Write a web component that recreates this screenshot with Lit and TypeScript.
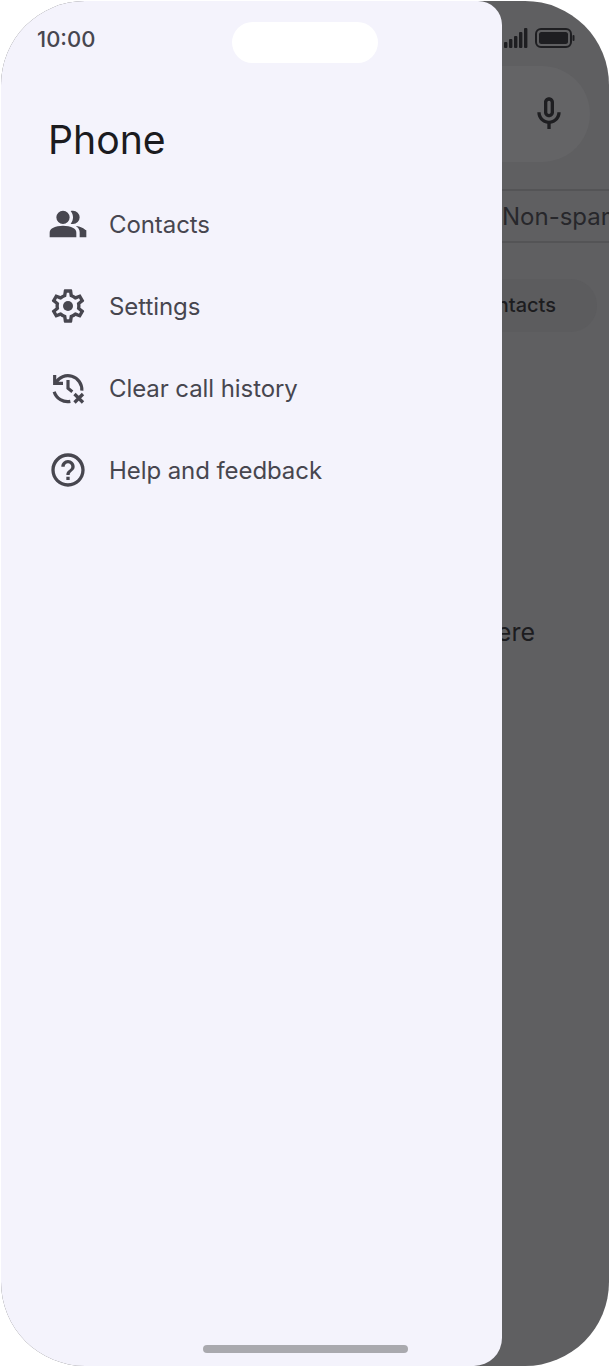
import { LitElement, html, css, svg } from 'lit';
import { customElement } from 'lit/decorators.js';

const MENU = [
  {
    label: 'Contacts',
    icon: svg`<path d="M1 20v-2.8q0-.85.438-1.563.437-.712 1.162-1.087 1.55-.775 3.15-1.163Q7.35 13 9 13t3.25.387q1.6.388 3.15 1.163.725.375 1.163 1.087Q17 16.35 17 17.2V20Zm18 0v-3q0-1.1-.612-2.113-.613-1.012-1.738-1.737 1.275.15 2.4.512 1.125.363 2.1.888.9.5 1.375 1.112Q23 15.275 23 16v4ZM9 12q-1.65 0-2.825-1.175Q5 9.65 5 8q0-1.65 1.175-2.825Q7.35 4 9 4q1.65 0 2.825 1.175Q13 6.35 13 8q0 1.65-1.175 2.825Q10.65 12 9 12Zm10-4q0 1.65-1.175 2.825Q16.65 12 15 12q-.275 0-.7-.062-.425-.063-.7-.138.675-.8 1.037-1.775Q15 9.05 15 8t-.363-2.025Q14.275 5 13.6 4.2q.35-.125.7-.163Q14.65 4 15 4q1.65 0 2.825 1.175Q19 6.35 19 8Z"/>`,
  },
  {
    label: 'Settings',
    icon: svg`<path d="M19.43 12.98c.04-.32.07-.64.07-.98s-.03-.66-.07-.98l2.11-1.65c.19-.15.24-.42.12-.64l-2-3.46c-.12-.22-.39-.3-.61-.22l-2.49 1c-.52-.4-1.08-.73-1.69-.98l-.38-2.65C14.46 2.18 14.25 2 14 2h-4c-.25 0-.46.18-.49.42l-.38 2.65c-.61.25-1.17.59-1.69.98l-2.49-1c-.23-.09-.49 0-.61.22l-2 3.46c-.13.22-.07.49.12.64l2.11 1.65c-.04.32-.07.65-.07.98s.03.66.07.98l-2.11 1.65c-.19.15-.24.42-.12.64l2 3.46c.12.22.39.3.61.22l2.49-1c.52.4 1.08.73 1.69.98l.38 2.65c.03.24.24.42.49.42h4c.25 0 .46-.18.49-.42l.38-2.65c.61-.25 1.17-.59 1.69-.98l2.49 1c.23.09.49 0 .61-.22l2-3.46c.12-.22.07-.49-.12-.64l-2.11-1.65zM17.45 11.27c.04.31.05.52.05.73 0 .21-.02.43-.05.73l-.14 1.13.89.7 1.08.84-.7 1.21-1.27-.51-1.04-.42-.9.68c-.43.32-.84.56-1.25.73l-1.06.43-.16 1.13-.2 1.35h-1.4l-.19-1.35-.16-1.13-1.06-.43c-.43-.18-.83-.41-1.23-.71l-.91-.7-1.06.43-1.27.51-.7-1.21 1.08-.84.89-.7-.14-1.13c-.03-.31-.05-.54-.05-.74s.02-.43.05-.73l.14-1.13-.89-.7-1.08-.84.7-1.21 1.27.51 1.04.42.9-.68c.43-.32.84-.56 1.25-.73l1.06-.43.16-1.13.2-1.35h1.39l.19 1.35.16 1.13 1.06.43c.43.18.83.41 1.23.71l.91.7 1.06-.43 1.27-.51.7 1.21-1.07.85-.89.7.14 1.13z"/><circle cx="12" cy="12" r="3"/>`,
  },
  {
    label: 'Clear call history',
    icon: svg`<g fill="none" stroke="currentColor" stroke-width="1.9">
      <path d="M4 4.2V9.2H9"/>
      <path d="M4.6 8.9A8.4 8.4 0 0 1 20.3 13.6"/>
      <path d="M3.7 14.2A8.4 8.4 0 0 0 13.4 20"/>
      <path d="M12 7.2V12.2L14.6 14.2"/>
      <path d="M15.9 15.6L21 20.7M21 15.6L15.9 20.7" stroke-width="2"/>
    </g>`,
  },
  {
    label: 'Help and feedback',
    icon: svg`<path d="M11 18h2v-2h-2v2zm1-16C6.48 2 2 6.48 2 12s4.48 10 10 10 10-4.48 10-10S17.52 2 12 2zm0 18c-4.41 0-8-3.59-8-8s3.59-8 8-8 8 3.59 8 8-3.59 8-8 8zm0-14c-2.21 0-4 1.79-4 4h2c0-1.1.9-2 2-2s2 .9 2 2c0 2-3 1.75-3 5h2c0-2.25 3-2.5 3-5 0-2.21-1.79-4-4-4z"/>`,
  },
];

@customElement('app-root')
export class AppRoot extends LitElement {
  static styles = css`
    :host {
      display: block;
      width: 611px;
      height: 1368px;
      padding: 1px 2px 2px 1px;
      box-sizing: border-box;
      background: #fff;
      font-family: Inter, 'Noto Sans', sans-serif;
    }
    .phone {
      position: relative;
      height: 100%;
      border-radius: 84px;
      overflow: hidden;
      background: #5f5f61;
    }

    /* what sits behind the scrim */
    .behind {
      display: flex;
      flex-direction: column;
      height: 100%;
      color: #1c1c1f;
    }
    .signal-row {
      display: flex;
      justify-content: flex-end;
      align-items: flex-start;
      gap: 7px;
      height: 65px;
      padding: 10px 34px 0 0;
      box-sizing: border-box;
    }
    .signal-row svg {
      display: block;
      margin-top: 17px;
    }
    .search {
      display: flex;
      justify-content: flex-end;
      align-items: center;
      height: 96px;
      margin: 0 19px 0 16px;
      padding-right: 21px;
      border-radius: 48px;
      background: #646466;
    }
    .search svg {
      width: 40px;
      height: 40px;
      fill: #1e1e21;
      display: block;
    }
    .tabs {
      margin-top: 27px;
      height: 54px;
      box-sizing: border-box;
      padding-left: 501px;
      border-top: 2px solid #545456;
      border-bottom: 2px solid #545456;
      display: flex;
      align-items: center;
      font-size: 24px;
      white-space: nowrap;
      color: #27272b;
      overflow: hidden;
    }
    .chip {
      align-self: flex-end;
      margin: 36px 12px 0 0;
      height: 53px;
      box-sizing: border-box;
      padding: 0 41px 2px 40px;
      border-radius: 27px;
      background: #5c5c5e;
      display: flex;
      align-items: center;
      font-size: 20px;
      font-weight: 500;
      color: #1c1c1f;
    }
    .empty {
      align-self: flex-end;
      margin: 285px 74px 0 0;
      font-size: 25px;
      line-height: 30px;
      color: #1c1c1f;
    }

    /* drawer */
    .drawer {
      position: absolute;
      top: 0;
      left: 0;
      bottom: 0;
      width: 501px;
      background: #f4f3fc;
      border-radius: 0 24px 28px 0;
      color: #47464f;
    }
    .time {
      padding: 25px 0 0 36px;
      font-size: 22px;
      line-height: 27px;
      font-weight: 500;
    }
    h1 {
      margin: 0;
      padding: 63px 0 0 47px;
      font-size: 39.2px;
      line-height: 48px;
      font-weight: 400;
      color: #1b1b1f;
    }
    ul {
      list-style: none;
      margin: 0;
      padding: 19px 0 0 47px;
    }
    li {
      display: flex;
      align-items: center;
      gap: 21px;
      height: 82px;
      font-size: 24px;
      letter-spacing: -0.08px;
    }
    li svg {
      width: 40px;
      height: 40px;
      flex: none;
      fill: currentColor;
    }

    .notch {
      position: absolute;
      top: 21px;
      left: 231px;
      width: 146px;
      height: 41px;
      border-radius: 21px;
      background: #fff;
    }
    .home-bar {
      position: absolute;
      left: 202px;
      bottom: 13px;
      width: 205px;
      height: 8px;
      border-radius: 4px;
      background: #a9a9ae;
    }
  `;

  render() {
    return html`
      <div class="phone">
        <div class="behind">
          <div class="signal-row">
            <svg width="24" height="21" viewBox="0 0 24 21" fill="#1e1e21">
              <rect x="0" y="14" width="3.4" height="6" rx="1" />
              <rect x="5" y="11" width="3.4" height="9" rx="1" />
              <rect x="10" y="8" width="3.4" height="12" rx="1" />
              <rect x="15" y="4" width="3.4" height="16" rx="1" />
              <rect x="20" y="0" width="3.4" height="20" rx="1" />
            </svg>
            <svg width="40" height="21" viewBox="0 0 40 21">
              <rect x="1" y="1" width="35" height="18" rx="5" fill="none" stroke="#1e1e21" stroke-width="2" />
              <rect x="4" y="4" width="29" height="12" rx="2.5" fill="#1e1e21" />
              <rect x="37.5" y="7" width="2" height="6" rx="1" fill="#1e1e21" />
            </svg>
          </div>
          <div class="search">
            <svg viewBox="0 0 24 24">
              <path d="M12 14c1.66 0 3-1.34 3-3V5c0-1.66-1.34-3-3-3S9 3.34 9 5v6c0 1.66 1.34 3 3 3zm-1-9c0-.55.45-1 1-1s1 .45 1 1v6c0 .55-.45 1-1 1s-1-.45-1-1V5zm6 6c0 2.76-2.24 5-5 5s-5-2.24-5-5H5c0 3.53 2.61 6.43 6 6.92V21h2v-3.08c3.39-.49 6-3.39 6-6.92h-2z" />
            </svg>
          </div>
          <div class="tabs">Non-spam</div>
          <div class="chip">Contacts</div>
          <div class="empty">Nothing here</div>
        </div>

        <nav class="drawer">
          <div class="time">10:00</div>
          <h1>Phone</h1>
          <ul>
            ${MENU.map(
              (item) => html`<li>
                <svg viewBox="0 0 24 24">${item.icon}</svg>
                <span>${item.label}</span>
              </li>`
            )}
          </ul>
        </nav>

        <div class="notch"></div>
        <div class="home-bar"></div>
      </div>
    `;
  }
}
